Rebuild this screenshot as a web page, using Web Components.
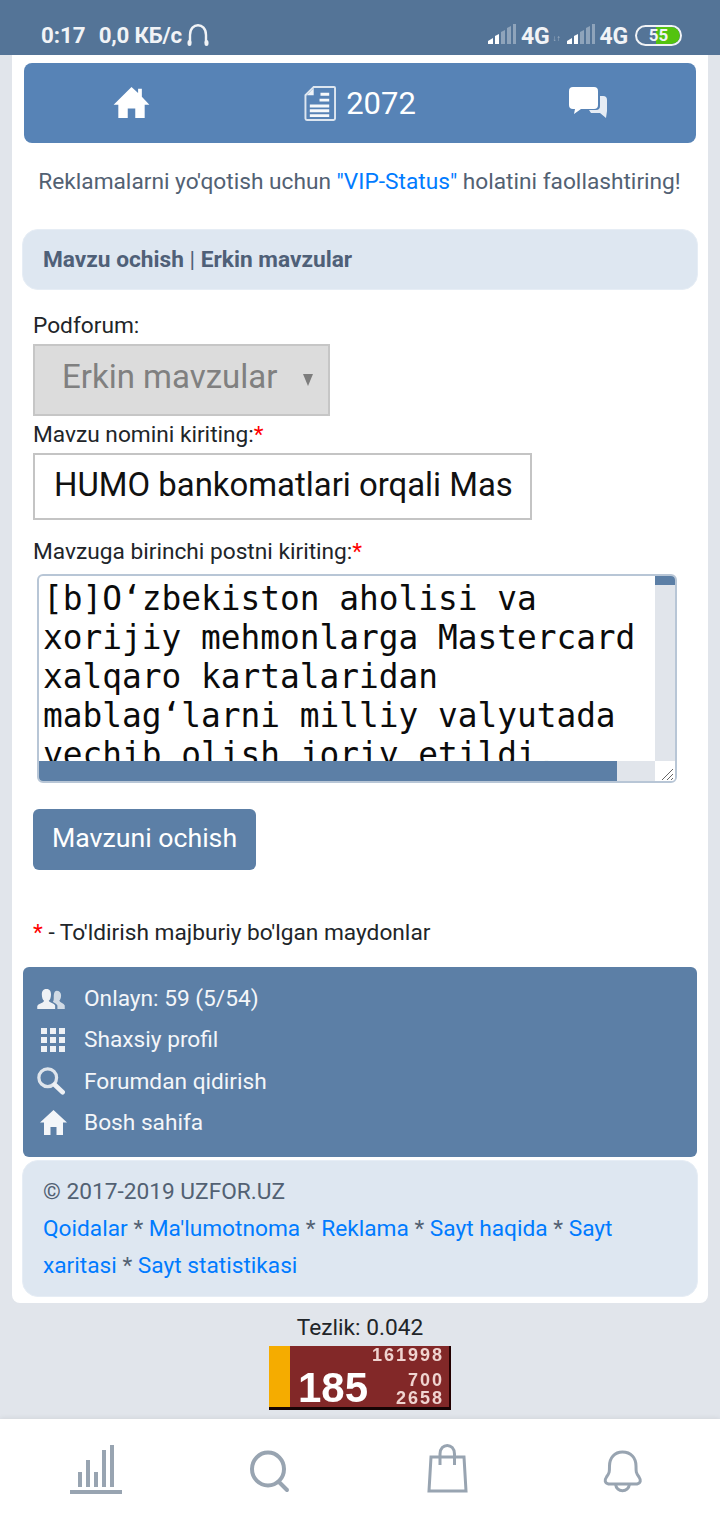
<!DOCTYPE html>
<html>
<head>
<meta charset="utf-8">
<title>Mavzu ochish</title>
<style>
  html, body { margin: 0; padding: 0; }
  body { width: 720px; height: 1520px; overflow: hidden; background: #e1e5eb; font-family: Roboto, "Liberation Sans", sans-serif; color: #212529; }
</style>
</head>
<body>
<status-bar></status-bar>
<page-card>
  <top-nav></top-nav>
  <vip-note></vip-note>
  <title-bar></title-bar>
  <topic-form></topic-form>
  <side-menu></side-menu>
  <site-footer></site-footer>
</page-card>
<speed-counter></speed-counter>
<bottom-nav></bottom-nav>

<script>
// small helper so each component stays short
function define(tag, html) {
  customElements.define(tag, class extends HTMLElement {
    constructor() {
      super();
      this.attachShadow({ mode: 'open' }).innerHTML = html;
    }
  });
}

const bars = `<svg width="28" height="20" viewBox="0 0 28 20">
  <path fill="#fff" d="M0 20v-3l5-3v6z"/><path fill="#fff" d="M7 20v-8l4-2v10z"/>
  <path fill="#fff" opacity=".35" d="M13 20V8l4-2v14zM19 20V4l4-2v18zM25 20V0h3v20z"/></svg>`;

define('status-bar', `
  <style>
    :host { display: flex; align-items: center; box-sizing: border-box; height: 55px; padding: 15px 38px 0 41px; background: #547497; color: #f1f3f6; font: 700 22.300px Roboto, sans-serif; }
    .speed { margin-left: 13px; letter-spacing: -.2px; }
    .phones { margin-left: 4px; }
    .right { margin-left: auto; display: flex; align-items: center; }
    .right svg { margin-right: 5px; margin-top: -3px; }
    .g { font-size: 23px; letter-spacing: -.2px; margin-top: 2px; }
    .tiny { width: 8px; height: 8px; margin: 8px 6px 0 3px; font-size: 8px; line-height: 8px; font-weight: 400; opacity: .5; white-space: nowrap; }
    .batt { position: relative; box-sizing: border-box; height: 21px; margin-left: 7px; width: 47px; border: 2px solid #f1f3f6; border-radius: 11px; overflow: hidden; font-size: 17px; line-height: 17px; text-align: center; }
    .batt i { position: absolute; left: 19px; right: 0; top: 0; bottom: 0; background: #53c30f; border-radius: 0 9px 9px 0; }
    .batt span { position: relative; }
  </style>
  <span>0:17</span><span class="speed">0,0 КБ/с</span>
  <svg class="phones" width="24" height="24" viewBox="0 0 24 24" fill="none" stroke="#f1f3f6" stroke-width="2.400"><path d="M4 20V12C4 -1 20 -1 20 12V20"/><path stroke-width="4" stroke-linecap="round" d="M3.500 19v2M20.500 19v2"/></svg>
  <div class="right">${bars}<span class="g">4G</span><span class="tiny">↓↑</span>${bars}<span class="g">4G</span><div class="batt"><i></i><span>55</span></div></div>
`);

define('page-card', `
  <style>
    :host { display: block; box-sizing: border-box; width: 696px; height: 1248px; margin: 0 12px; padding: 8px 11px 0 10px; background: #fff; border-radius: 0 0 8px 8px; }
  </style>
  <slot></slot>
`);

define('top-nav', `
  <style>
    :host { display: grid; grid-template-columns: 1fr 1fr 1fr; align-items: center; box-sizing: border-box; width: 672px; height: 80px; margin-left: 2px; background: #5783b6; border-radius: 8px; color: #fff; font: 400 31px Roboto, sans-serif; }
    div { display: flex; align-items: center; justify-content: center; }
    span { margin-left: 10px; }
    .home { margin-left: -10px; margin-top: -3px; } .doc { margin-left: 0; } .chat { margin-left: 8px; margin-top: -1px; }
  </style>
  <div><svg class="home" width="37" height="32" viewBox="0 0 38 34" fill="#fff"><path d="M19 1 L26 7.500 V3 h4 V11.500 L38 20 h-5 V34 H23 V24 H15 V34 H5 V20 H0 Z"/></svg></div>
  <div class="mid"><svg class="doc" width="32" height="37" viewBox="0 0 33 37" fill="none" stroke="#fff"><path stroke-width="2" opacity=".8" d="M10 1.500H31a1 1 0 0 1 1 1V34a1.500 1.500 0 0 1-1.500 1.500H3A1.500 1.500 0 0 1 1.500 34V10Z"/><path fill="#fff" stroke="none" opacity=".9" d="M3 10 L10 3 V10Z"/><path stroke-width="3" opacity=".95" d="M17 9h9M16 15h10M6 21h20M6 26h20M6 31h20"/></svg><span>2072</span></div>
  <div><svg class="chat" width="38" height="31" viewBox="0 0 38 31" fill="#fff"><path d="M27 9h7a4 4 0 0 1 4 4v11l-1 7-6-5H22l-2-3h7a4 4 0 0 0 4-4V9z" opacity=".85"/><path d="M4 0h21a4 4 0 0 1 4 4v14a4 4 0 0 1-4 4H12l-7 5 1-5H4a4 4 0 0 1-4-4V4a4 4 0 0 1 4-4z"/></svg></div>
`);

define('vip-note', `
  <style>
    :host { display: block; margin-top: 25px; height: 61px; text-align: center; font: 400 22.700px/28px Roboto, sans-serif; color: #526173; white-space: nowrap; }
    a { color: #007bff; }
  </style>
  Reklamalarni yo'qotish uchun <a>"VIP-Status"</a> holatini faollashtiring!
`);

define('title-bar', `
  <style>
    :host { display: block; box-sizing: border-box; height: 61px; width: 676px; padding: 0 20px; background: #dee7f1; border-radius: 16px; font: 700 22.700px/59px Roboto, sans-serif; color: #4f6078; border: 1px solid #e6edf5; }
    span { font-weight: 400; }
  </style>
  Mavzu ochish <span>|</span> Erkin mavzular
`);

define('topic-form', `
  <style>
    :host { display: block; padding: 22px 0 0 11px; font: 400 22.700px/28px Roboto, sans-serif; color: #212529; }
    .lbl { display: block; height: 28px; }
    b { font-weight: 400; color: #f00; }
    .select { display: flex; align-items: center; justify-content: space-between; box-sizing: border-box; width: 297px; height: 72px; margin-top: 4px; padding: 0 15px 0 27px; background: #dcdcdc; border: 2px solid #c6c6c6; color: #808080; font-size: 33px; }
    .select span { margin-top: -6px; }
    .select i { font-style: normal; width: 0; height: 0; border-left: 5.500px solid transparent; border-right: 5.500px solid transparent; border-top: 12px solid #7d7d7d; margin-top: 0; }
    .l2 { margin-top: 5px; }
    .input { box-sizing: border-box; width: 499px; height: 67px; margin-top: 4px; padding: 0 19px; border: 2px solid #c4c4c4; background: #fff; font-size: 32.900px; line-height: 59px; color: #111; white-space: nowrap; overflow: hidden; }
    .l3 { margin-top: 18px; }
    .area { position: relative; box-sizing: border-box; width: 640px; height: 209px; margin: 8px 0 0 4px; border: 2px solid #b8c6d6; border-radius: 6px; background: #fff; overflow: hidden; }
    .text { width: 615px; height: 186px; overflow: hidden; padding: 4px 0 0 4px; box-sizing: border-box; font: 400 32.800px/39px "DejaVu Sans Mono", monospace; color: #0b0b0b; white-space: pre; }
    .vt { position: absolute; right: 0; top: 0; width: 20px; height: 186px; background: #e1e5eb; }
    .vt i { display: block; height: 9px; background: #5c7fa6; }
    .ht { position: absolute; left: 0; bottom: 0; width: 616px; height: 20px; background: #e1e5eb; }
    .ht i { display: block; width: 578px; height: 100%; background: #5c7fa6; }
    .grip { position: absolute; right: 0; bottom: 0; width: 20px; height: 20px; background: #fff; }
    .btn { display: block; box-sizing: border-box; height: 61px; width: 223px; margin-top: 26px; background: #5c7fa6; border-radius: 6px; color: #fff; font-size: 26.700px; line-height: 58px; text-align: center; }
    .req { margin-top: 49px; height: 27px; white-space: nowrap; }
  </style>
  <div class="lbl">Podforum:</div>
  <div class="select"><span>Erkin mavzular</span><i></i></div>
  <div class="lbl l2">Mavzu nomini kiriting:<b>*</b></div>
  <div class="input">HUMO bankomatlari orqali Mas</div>
  <div class="lbl l3">Mavzuga birinchi postni kiriting:<b>*</b></div>
  <div class="area">
    <div class="text">[b]O‘zbekiston aholisi va
xorijiy mehmonlarga Mastercard
xalqaro kartalaridan
mablag‘larni milliy valyutada
yechib olish joriy etildi.</div>
    <div class="vt"><i></i></div>
    <div class="ht"><i></i></div>
    <div class="grip"><svg width="20" height="20" viewBox="0 0 20 20" fill="none" stroke="#666"><path d="M7 18 18 7M12 18l6-6M16 18l2-2"/></svg></div>
  </div>
  <div class="btn">Mavzuni ochish</div>
  <div class="req"><b>*</b> - To'ldirish majburiy bo'lgan maydonlar</div>
`);

define('side-menu', `
  <style>
    :host { display: block; box-sizing: border-box; width: 674px; height: 190px; margin: 21px 0 0 1px; padding: 11px 0 0 14px; background: #5c7fa6; border-radius: 6px; color: #f4f6f9; font: 400 22.700px/41.300px Roboto, sans-serif; }
    div { display: flex; align-items: center; height: 41.300px; }
    span { display: flex; justify-content: center; width: 32px; margin-right: 15px; }
    .nudge { margin-right: 4px; }
  </style>
  <div><span><svg class="nudge" width="30" height="22" viewBox="0 0 30 24" fill="#eef1f5"><path d="M10 1c4 0 5 3 5 6s-1 6-2.500 7c1 2 6 3 7 5v4H0v-3c1-3 6-3 7.500-6C6 13 5 10 5 7s1-6 5-6z"/><path opacity=".8" d="M21 3c3 0 5 2 5 5s-1 5-2 6c1 2 5 3 6 5v4h-8v-4c-1-2-4-3-5-4 1-1 1-3 1-5 0-4 1-7 3-7z"/></svg></span>Onlayn: 59 (5/54)</div>
  <div><span><svg width="24" height="24" viewBox="0 0 24 24" fill="#eef1f5"><path d="M0 0h6v6H0zM9 0h6v6H9zM18 0h6v6h-6zM0 9h6v6H0zM9 9h6v6H9zM18 9h6v6h-6zM0 18h6v6H0zM9 18h6v6H9zM18 18h6v6h-6z"/></svg></span>Shaxsiy profil</div>
  <div><span><svg class="nudge" width="30" height="28" viewBox="0 0 30 30" fill="none"><circle cx="11.500" cy="11.500" r="9.500" stroke="#dfe5ec" stroke-width="3.500"/><path d="M19 19l8.500 8" stroke="#eef1f5" stroke-width="5" stroke-linecap="round"/></svg></span>Forumdan qidirish</div>
  <div><span><svg width="27" height="25" viewBox="0 0 27 25" fill="#f4f6f9"><path d="M13.500 0 27 12.500h-4V25h-6.500v-8h-6v8H4V12.500H0z"/></svg></span>Bosh sahifa</div>
`);

define('site-footer', `
  <style>
    :host { display: block; box-sizing: border-box; width: 676px; height: 137px; margin-top: 3px; padding: 12px 60px 0 20px; background: #dee7f1; border: 1px solid #e6edf5; border-radius: 16px; font: 400 22.700px/37px Roboto, sans-serif; color: #526173; }
    a { color: #007bff; }
  </style>
  © 2017-2019 UZFOR.UZ<br>
  <a>Qoidalar</a> * <a>Ma'lumotnoma</a> * <a>Reklama</a> * <a>Sayt haqida</a> * <a>Sayt</a><br><a>xaritasi</a> * <a>Sayt statistikasi</a>
`);

define('speed-counter', `
  <style>
    :host { display: block; height: 116px; padding-top: 11px; text-align: center; font: 400 22.700px/28px Roboto, sans-serif; color: #212529; }
    .box { position: relative; box-sizing: border-box; width: 182px; height: 64px; margin: 4px 0 0 269px; background: #822828; border-right: 2px solid #200; border-bottom: 3px solid #160404; }
    .box::before { content: ""; position: absolute; left: 0; top: 0; bottom: 0; width: 21px; background: #f5ac00; }
    .box span { position: absolute; right: 5px; color: #f0d4d0; font: 700 18px/20px "Liberation Sans", sans-serif; letter-spacing: 2px; filter: blur(.5px); }
    .box .big { left: 29px; right: auto; top: 17px; font-size: 42px; line-height: 50px; letter-spacing: 0; color: #fff; }
    .a { top: -1px; } .b { top: 24px; } .c { top: 42px; }
  </style>
  Tezlik: 0.042
  <div class="box"><span class="big">185</span><span class="a">161998</span><span class="b">700</span><span class="c">2658</span></div>
`);

define('bottom-nav', `
  <style>
    :host { display: block; position: fixed; left: 0; right: 0; bottom: 0; height: 101px; background: #fff; box-shadow: 0 -1px 5px rgba(0,0,0,.07); }
    svg { position: absolute; fill: none; stroke: #98a4b1; stroke-width: 3; }
  </style>
  <svg style="left:68px;top:24px" width="56" height="52" viewBox="0 0 56 52"><path stroke-width="4" d="M2 49H54"/><path stroke-width="4" d="M12 44V29M20 44V17M28 44V29M36 44V7M44 44V2"/></svg>
  <svg style="left:248px;top:28px" width="44" height="46" viewBox="0 0 44 46"><ellipse stroke-width="4" cx="20" cy="22" rx="16" ry="16.500"/><path stroke-width="4" stroke-linecap="round" d="M32 36l7 7"/></svg>
  <svg style="left:426px;top:24px" width="44" height="50" viewBox="0 0 44 50"><path d="M5 14H38L40 48H3Z"/><path d="M14 22V11C14 -0.500 28.500 -0.500 28.500 11V22"/></svg>
  <svg style="left:600px;top:28px" width="46" height="48" viewBox="0 0 46 48"><path d="M22.500 5c-8 0-13 6-13 14 0 6 0 7-3 11-2 3-2 6 2 7H37c4-1 4-4 2-7-3-4-3-5-3-11 0-8-5-14-13.500-14z"/><path d="M15.500 37c1 9 13 9 14 0"/></svg>
`);
</script>
</body>
</html>
